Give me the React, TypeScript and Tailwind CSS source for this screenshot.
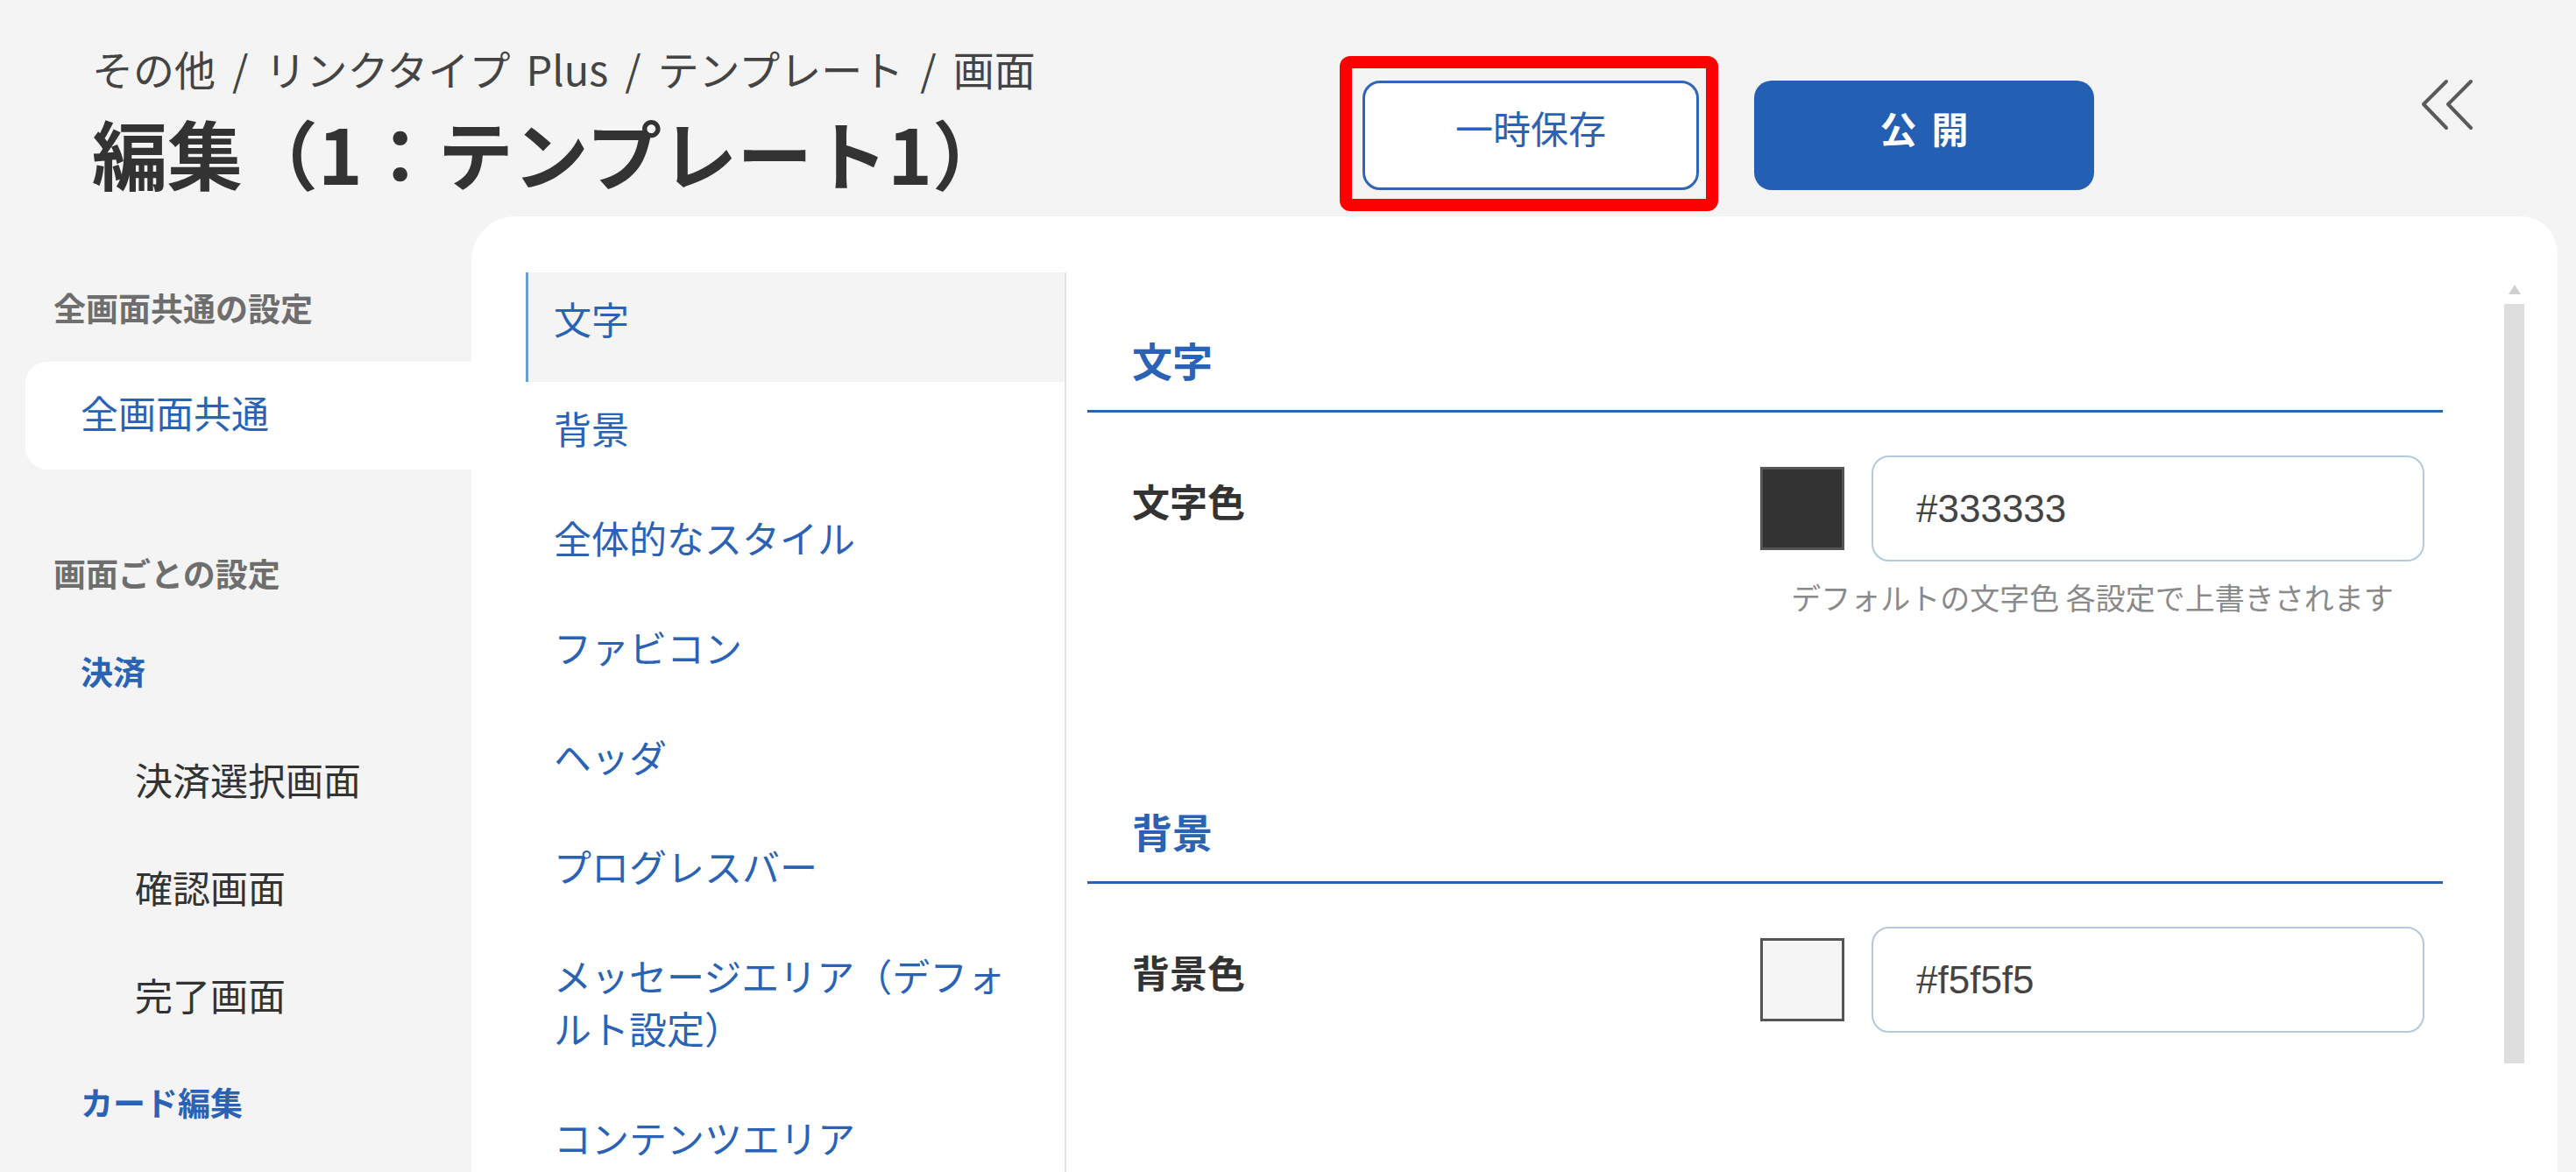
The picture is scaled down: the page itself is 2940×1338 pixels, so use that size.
import React from 'react';

// 左メニュー・中央メニュー・設定項目のデータ
const screenItems = ['決済選択画面', '確認画面', '完了画面'];

const navItems = [
  '文字',
  '背景',
  '全体的なスタイル',
  'ファビコン',
  'ヘッダ',
  'プログレスバー',
  'メッセージエリア（デフォルト設定）',
  'コンテンツエリア',
];

interface ColorSetting {
  title: string;
  label: string;
  value: string;
  swatch: string;
  help?: string;
}

const sections: ColorSetting[] = [
  {
    title: '文字',
    label: '文字色',
    value: '#333333',
    swatch: 'bg-[#333333]',
    help: 'デフォルトの文字色 各設定で上書きされます',
  },
  {
    title: '背景',
    label: '背景色',
    value: '#f5f5f5',
    swatch: 'bg-[#f5f5f5]',
  },
];

function DoubleChevron() {
  return (
    <svg width="60" height="60" viewBox="0 0 60 60" fill="none" stroke="#5a5a5a" strokeWidth="4" strokeLinecap="round" strokeLinejoin="round">
      <path d="M30 3 L4 29 L30 56" />
      <path d="M58 3 L32 29 L58 56" />
    </svg>
  );
}

function Header() {
  return (
    <div className="flex h-[247px] items-start pl-[105px]">
      {/* Title */}
      <div className="w-[1450px] pt-[50px]">
        <p className="text-[47px] leading-[56px] text-[#444444] whitespace-nowrap">
          その他<span className="mx-[19px]">/</span>リンクタイプ<span className="ml-[18px]">Plus</span><span className="mx-[19px]">/</span>テンプレート<span className="mx-[19px]">/</span>画面
        </p>
        <h1 className="mt-[18px] text-[86px] leading-[100px] font-bold text-[#333333] whitespace-nowrap">
          編集（1：テンプレート1）
        </h1>
      </div>

      {/* Buttons */}
      <div className="relative mt-[92px]">
        <button className="flex h-[125px] w-[384px] items-center justify-center rounded-[20px] border-[3px] border-[#2f66b9] bg-white pb-[18px] text-[43px] text-[#2a63b6]">
          一時保存
        </button>
        <div className="pointer-events-none absolute -left-[26px] -right-[22px] -top-[28px] -bottom-[24px] rounded-[12px] border-[14px] border-[#ff0000]"></div>
      </div>
      <button className="ml-[63px] mt-[92px] flex h-[125px] w-[388px] items-center justify-center rounded-[20px] bg-[#235fb3] pb-[18px] pl-[17px] text-[42px] font-bold tracking-[17px] text-white">
        公開
      </button>
      <div className="ml-[372px] mt-[90px]">
        <DoubleChevron />
      </div>
    </div>
  );
}

function Sidebar() {
  return (
    <div className="w-[538px] shrink-0 pt-[79px]">
      <p className="pl-[61px] text-[37px] leading-[50px] font-bold text-[#6e6e6e]">全画面共通の設定</p>
      <div className="mt-[37px] ml-[29px] flex h-[123px] items-center rounded-l-[25px] bg-white pl-[63px] pb-[8px] text-[43px] text-[#2a63b6]">
        全画面共通
      </div>

      <p className="mt-[93px] pl-[61px] text-[37px] leading-[50px] font-bold text-[#6e6e6e]">画面ごとの設定</p>
      <div className="mt-[26px] flex h-[123px] items-center pl-[92px] text-[37px] font-bold text-[#2a63b6]">決済</div>
      {screenItems.map((item) => (
        <div key={item} className="flex h-[123px] items-center pl-[154px] text-[43px] text-[#333333]">
          {item}
        </div>
      ))}
      <div className="flex h-[123px] items-center pl-[92px] text-[37px] font-bold text-[#2a63b6]">カード編集</div>
    </div>
  );
}

function SettingSection({ section, last }: { section: ColorSetting; last: boolean }) {
  return (
    <div className={last ? '' : 'pb-[144px]'}>
      <h2 className="border-b-[3px] border-[#2a63b6] pt-[69px] pb-[28px] pl-[51px] text-[46px] leading-[60px] font-bold text-[#2a63b6]">
        {section.title}
      </h2>
      <div className="mt-[49px] flex items-start justify-between pl-[51px] pr-[21px]">
        <p className="mt-[21px] text-[43px] leading-[60px] font-bold text-[#333333]">{section.label}</p>
        <div className="flex flex-col items-center">
          <div className="flex items-center gap-[31px]">
            <div className={`h-[95px] w-[96px] border-[3px] border-[#555555] ${section.swatch}`}></div>
            <input
              readOnly
              value={section.value}
              className="h-[121px] w-[631px] rounded-[20px] border-[2px] border-[#b3c9dd] bg-white pl-[49px] font-['Liberation_Sans',sans-serif] text-[44px] text-[#444444] outline-none"
            />
          </div>
          {section.help && (
            <p className="mt-[18px] text-[34px] leading-[46px] text-[#8a8a8a] whitespace-nowrap">{section.help}</p>
          )}
        </div>
      </div>
    </div>
  );
}

function EditorCard() {
  return (
    <div className="mr-[21px] flex h-full flex-1 rounded-tl-[50px] rounded-tr-[42px] bg-white pl-[62px] pt-[64px] pr-[38px]">
      {/* 項目ナビ */}
      <div className="w-[617px] shrink-0 border-r-[2px] border-[#e2e2e2]">
        {navItems.map((item, index) => (
          <div
            key={item}
            className={
              index === 0
                ? 'border-l-[3px] border-[#6a9fd4] bg-[#f4f4f4] pt-[22px] pb-[43px] pl-[29px] pr-[40px] text-[43px] leading-[60px] text-[#2a63b6]'
                : 'border-l-[3px] border-transparent pt-[22px] pb-[43px] pl-[29px] pr-[40px] text-[43px] leading-[60px] text-[#2a63b6]'
            }
          >
            {item}
          </div>
        ))}
      </div>

      {/* 設定内容 */}
      <div className="ml-[24px] flex-1">
        {sections.map((section, index) => (
          <SettingSection key={section.title} section={section} last={index === sections.length - 1} />
        ))}
      </div>

      {/* Scrollbar */}
      <div className="ml-[70px] flex w-[23px] shrink-0 flex-col items-center">
        <div className="mt-[14px] h-0 w-0 border-x-[7px] border-b-[11px] border-x-transparent border-b-[#cfcfcf]"></div>
        <div className="mt-[11px] h-[867px] w-[23px] bg-[#dedede]"></div>
      </div>
    </div>
  );
}

export default function App() {
  return (
    <div className="h-[1338px] w-[2940px] overflow-hidden bg-[#f4f4f4] font-['Noto_Sans_CJK_JP','Noto_Sans',sans-serif]">
      <Header />
      <div className="flex h-[1091px]">
        <Sidebar />
        <EditorCard />
      </div>
    </div>
  );
}
